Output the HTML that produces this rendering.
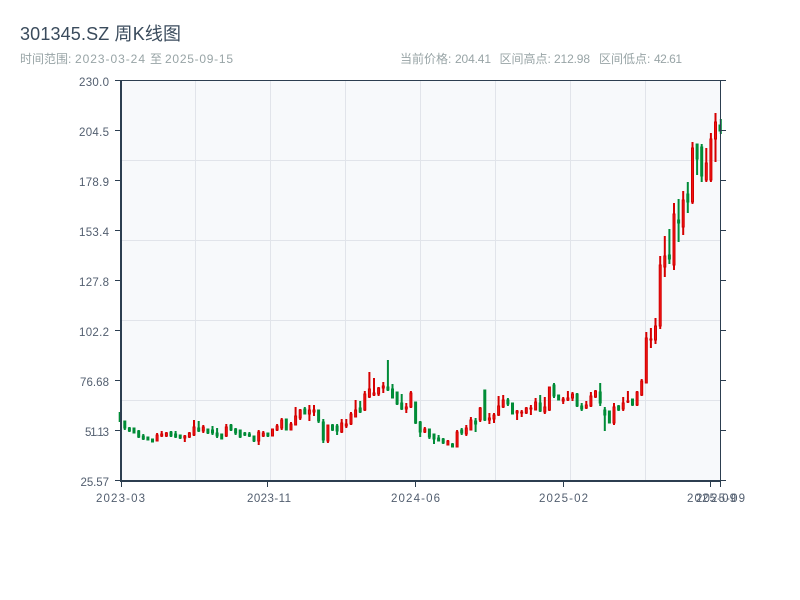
<!DOCTYPE html>
<html>
<head>
<meta charset="utf-8">
<style>
html,body{margin:0;padding:0;background:#fff;width:800px;height:600px;overflow:hidden}
svg{display:block}
text{font-family:"Liberation Sans","Noto Sans CJK SC",sans-serif}
.s{font-size:12px;fill:#98a4a6}
.a{font-size:11.5px;fill:#525e6f}
</style>
</head>
<body>
<svg width="800" height="600" viewBox="0 0 800 600" xmlns="http://www.w3.org/2000/svg">
<text x="20" y="40" font-size="18" fill="#3a4b5c" textLength="161" lengthAdjust="spacing">301345.SZ 周K线图</text>
<text class="s" x="20" y="63">时间范围:</text>
<text class="s" x="75" y="63" textLength="70" lengthAdjust="spacing">2023-03-24</text>
<text class="s" x="150" y="63">至</text>
<text class="s" x="165" y="63" textLength="68" lengthAdjust="spacing">2025-09-15</text>
<text class="s" x="400" y="63">当前价格:</text>
<text class="s" x="455" y="63" textLength="36" lengthAdjust="spacing">204.41</text>
<text class="s" x="499.5" y="63">区间高点:</text>
<text class="s" x="554" y="63" textLength="36" lengthAdjust="spacing">212.98</text>
<text class="s" x="599" y="63">区间低点:</text>
<text class="s" x="654" y="63" textLength="28" lengthAdjust="spacing">42.61</text>

<rect x="121" y="80" width="600" height="401" fill="#f7f9fb"/>
<path d="M121 160.5H720M121 240.5H720M121 320.5H720M121 400.5H720M195.5 81V480M270.5 81V480M345.5 81V480M420.5 81V480M495.5 81V480M570.5 81V480M645.5 81V480" stroke="#e1e4ea" stroke-width="1" fill="none"/>

<path fill="none" stroke="#d50000" stroke-width="2" d="M157.1 433V441M161.7 431V437M166.4 432V437M184.8 435V442M189.4 432V438M194 420V436M203.3 425V433M226.3 424V437M258.7 430V445M263.3 431V437M272.5 429V436M277.1 424V431M281.7 418V430M291 422V430M295.6 407V425M300.2 409V420M309.4 405V421M314 405V416M327.9 425V443M341.7 419V433M346.3 419V428M351 412V425M355.6 400V417M364.8 391V411M369.4 372V398M374 378V396M378.6 387V396M383.3 382V393M406.3 403V413M410.9 391V408M424.8 427V433M447.9 440V445M457.1 430V447M466.3 425V436M470.9 417V430M480.2 407V422M489.4 413V424M494 413V423M498.6 396V416M503.2 395V408M517.1 410V420M521.7 410V417M526.3 407V414M530.9 405V415M535.6 398V410M544.8 397V414M549.4 387V411M563.2 397V404M567.9 391V401M572.5 392V401M586.3 401V409M590.9 392V407M595.5 390V398M614 403V425M623.2 397V411M627.9 391V403M637.1 391V406M641.7 379V396M646.3 332V383M650.9 328V348M655.5 318V344M660.2 256V329M664.8 236V277M674 203V270M683.2 191V235M692.5 142V204M706.3 148V182M710.9 133V182M715.5 113V162"/>
<path fill="none" stroke="#008c38" stroke-width="2" d="M124.8 421V430M129.4 427V432M134 428V433M138.7 430V438M143.3 434V440M147.9 437V440M152.5 439V442M171 431V437M175.6 431V438M180.2 435V439M198.7 421V432M207.9 429V434M212.5 426V435M217.1 428V438M221.7 434V439M231 424V431M235.6 428V435M240.2 430V438M244.8 432V436M249.4 432V437M254 436V442M267.9 433V437M286.3 419V430M304.8 407V414M318.6 410V423M323.3 419V443M332.5 424V431M337.1 424V435M360.2 401V413M387.9 360V391M392.5 384V398M397.1 392V405M401.7 394V410M415.6 402V424M420.2 421V437M429.4 429V439M434 434V444M438.6 435V441M443.2 438V444M452.5 443V447M461.7 428V435M475.6 418V432M484.8 390V421M507.9 398V406M512.5 403V414M540.2 395V412M554 383V398M558.6 395V400M577.1 393V407M581.7 403V411M600.2 383V406M604.8 407V431M609.4 411V423M618.6 405V411M632.5 399V406M669.4 229V264M678.6 199V242M687.8 182V213M697.1 144V175M701.7 144V182M720.8 119V134"/>
<path fill="#f21414" stroke="#d10000" stroke-width="1" d="M156.1 435h2V441h-2zM160.7 434h2V436h-2zM165.4 433h2V436h-2zM183.8 436h2V438h-2zM188.4 433h2V437h-2zM193 427h2V435h-2zM202.3 427h2V431h-2zM225.3 427h2V436h-2zM257.7 432h2V441h-2zM262.3 433h2V436h-2zM271.5 429h2V436h-2zM276.1 426h2V430h-2zM280.7 420h2V428h-2zM290 424h2V430h-2zM294.6 416h2V425h-2zM299.2 410h2V418h-2zM308.4 410h2V414h-2zM313 410h2V412h-2zM326.9 425h2V441h-2zM340.7 423h2V432h-2zM345.3 424h2V426h-2zM350 414h2V424h-2zM354.6 410h2V417h-2zM363.8 394h2V410h-2zM368.4 389h2V397h-2zM373 393h2V395h-2zM377.6 388h2V394h-2zM382.3 386h2V388h-2zM405.3 407h2V409h-2zM409.9 393h2V407h-2zM423.8 429h2V432h-2zM446.9 441h2V445h-2zM456.1 432h2V447h-2zM465.3 428h2V434h-2zM469.9 420h2V430h-2zM479.2 408h2V420h-2zM488.4 418h2V420h-2zM493 415h2V419h-2zM497.6 406h2V415h-2zM502.2 400h2V407h-2zM516.1 411h2V413h-2zM520.7 412h2V413h-2zM525.3 408h2V413h-2zM529.9 408h2V409h-2zM534.6 402h2V410h-2zM543.8 407h2V412h-2zM548.4 387h2V410h-2zM562.2 399h2V401h-2zM566.9 398h2V400h-2zM571.5 394h2V398h-2zM585.3 405h2V408h-2zM589.9 396h2V406h-2zM594.5 391h2V397h-2zM613 407h2V423h-2zM622.2 403h2V409h-2zM626.9 401h2V402h-2zM636.1 392h2V405h-2zM640.7 381h2V395h-2zM645.3 338h2V383h-2zM649.9 339h2V340h-2zM654.5 326h2V340h-2zM659.2 265h2V326h-2zM663.8 256h2V267h-2zM673 214h2V265h-2zM682.2 200h2V227h-2zM691.5 148h2V202h-2zM705.3 163h2V180h-2zM709.9 139h2V180h-2zM714.5 122h2V139h-2z"/>
<path fill="#008f38" stroke="#008a36" stroke-width="1" d="M119.2 412.5h2V421.5h-2zM123.8 421h2V428h-2zM128.4 428h2V431h-2zM133 428h2V433h-2zM137.7 431h2V437h-2zM142.3 436h2V439h-2zM146.9 437h2V440h-2zM151.5 439h2V442h-2zM170 432h2V436h-2zM174.6 434h2V437h-2zM179.2 435h2V438h-2zM197.7 428h2V431h-2zM206.9 429h2V433h-2zM211.5 430h2V433h-2zM216.1 433h2V436h-2zM220.7 434h2V439h-2zM230 425h2V430h-2zM234.6 429h2V433h-2zM239.2 430h2V437h-2zM243.8 433h2V435h-2zM248.4 434h2V436h-2zM253 436h2V441h-2zM266.9 433h2V436h-2zM285.3 419h2V430h-2zM303.8 409h2V414h-2zM317.6 410h2V421h-2zM322.3 422h2V440h-2zM331.5 425h2V430h-2zM336.1 426h2V431h-2zM359.2 408h2V412h-2zM386.9 387h2V390h-2zM391.5 389h2V398h-2zM396.1 392h2V404h-2zM400.7 403h2V409h-2zM414.6 402h2V423h-2zM419.2 422h2V432h-2zM428.4 429h2V437h-2zM433 434h2V439h-2zM437.6 438h2V441h-2zM442.2 439h2V443h-2zM451.5 444h2V447h-2zM460.7 430h2V433h-2zM474.6 421h2V424h-2zM483.8 390h2V420h-2zM506.9 400h2V404h-2zM511.5 403h2V414h-2zM539.2 403h2V411h-2zM553 385h2V396h-2zM557.6 395h2V400h-2zM576.1 394h2V406h-2zM580.7 406h2V409h-2zM599.2 392h2V403h-2zM603.8 410h2V415h-2zM608.4 411h2V423h-2zM617.6 406h2V410h-2zM631.5 399h2V405h-2zM668.4 255h2V259h-2zM677.6 220h2V223h-2zM686.8 194h2V202h-2zM696.1 144h2V159h-2zM700.7 147h2V176h-2zM719 125h2V131h-2z"/>

<path d="M115 80.5H726M115 130.5H121M115 180.5H121M115 230.5H121M115 280.5H121M115 330.5H121M115 380.5H121M115 430.5H121M115 480.5H121M720.5 80V481M720 130.5H726M720 180.5H726M720 230.5H726M720 280.5H726M720 330.5H726M720 380.5H726M720 430.5H726M720 480.5H726M121.5 482V487M267.5 482V487M415.5 482V487M563.5 482V487M710.5 482V487M720.5 482V487" stroke="#2c3e50" stroke-width="1" fill="none"/>
<path d="M121 80V482M120 481H721" stroke="#2c3e50" stroke-width="2" fill="none"/>

<text class="a" x="79" y="86" textLength="30" lengthAdjust="spacing">230.0</text>
<text class="a" x="79" y="136" textLength="30" lengthAdjust="spacing">204.5</text>
<text class="a" x="79" y="186" textLength="30" lengthAdjust="spacing">178.9</text>
<text class="a" x="79" y="236" textLength="30" lengthAdjust="spacing">153.4</text>
<text class="a" x="79" y="286" textLength="30" lengthAdjust="spacing">127.8</text>
<text class="a" x="79" y="336" textLength="30" lengthAdjust="spacing">102.2</text>
<text class="a" x="80" y="386" textLength="29" lengthAdjust="spacing">76.68</text>
<text class="a" x="85" y="436" textLength="24" lengthAdjust="spacing">51.13</text>
<text class="a" x="80.5" y="486" textLength="28.5" lengthAdjust="spacing">25.57</text>
<text class="a" x="96" y="502" textLength="49" lengthAdjust="spacing">2023-03</text>
<text class="a" x="247" y="502" textLength="44" lengthAdjust="spacing">2023-11</text>
<text class="a" x="391" y="502" textLength="49" lengthAdjust="spacing">2024-06</text>
<text class="a" x="539" y="502" textLength="49" lengthAdjust="spacing">2025-02</text>
<text class="a" x="687" y="502" textLength="49" lengthAdjust="spacing">2025-09</text>
<text class="a" x="696" y="502" textLength="49" lengthAdjust="spacing">2025-09</text>
</svg>
</body>
</html>
